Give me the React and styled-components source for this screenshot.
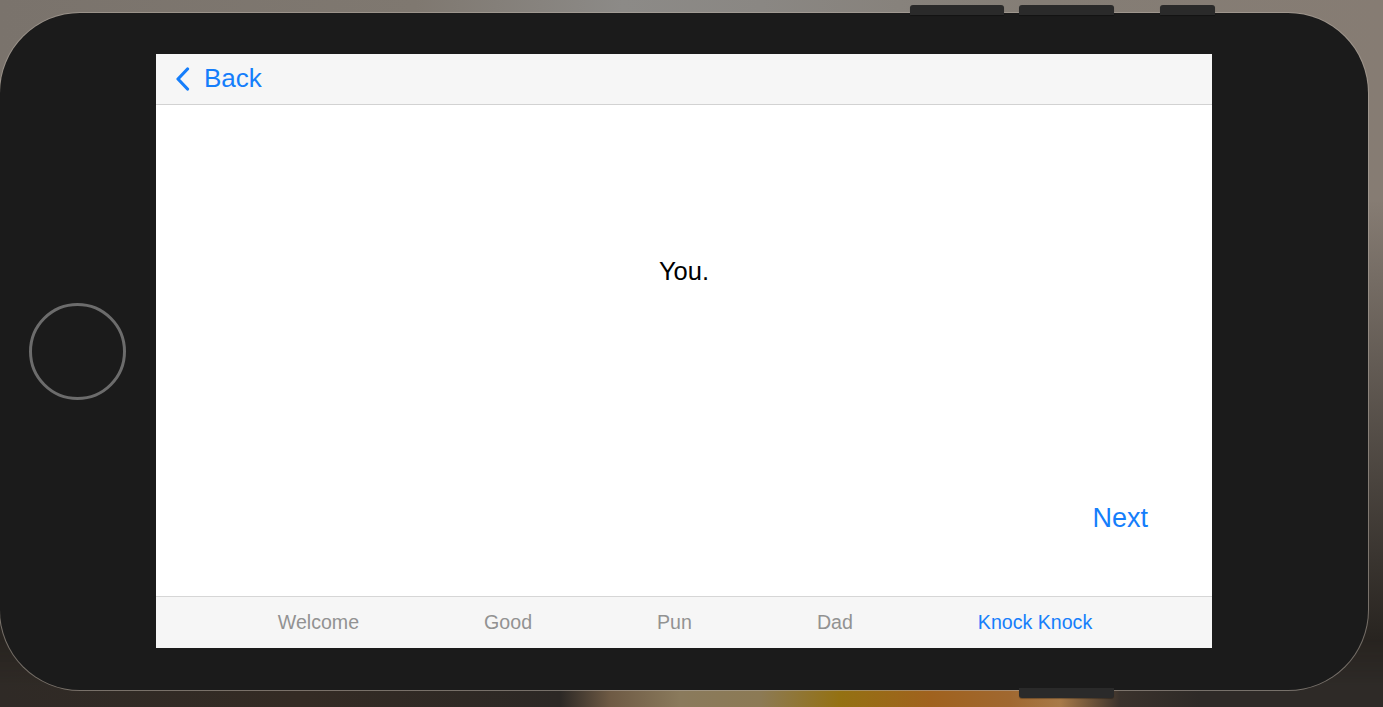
import React from "react";
import styled, { createGlobalStyle } from "styled-components";

const GlobalStyle = createGlobalStyle`
  html, body { margin: 0; padding: 0; overflow: hidden; }
  body { font-family: "Liberation Sans", Arial, sans-serif; }
`;

const Page = styled.div`
  width: 1383px;
  height: 707px;
  box-sizing: border-box;
  padding-top: 13px;
  overflow: hidden;
  position: relative;
  background:
    linear-gradient(180deg, rgba(0,0,0,0) 0px, rgba(0,0,0,0) 200px, rgba(40,36,32,1) 640px),
    linear-gradient(90deg, #7a736c 0%, #7f7870 30%, #8c8a87 45%, #8a8783 55%, #847d75 75%, #867c73 100%);
`;

const BottomGlow = styled.div`
  position: absolute;
  left: 0;
  right: 0;
  top: 640px;
  bottom: 0;
  -webkit-mask-image: linear-gradient(180deg, transparent 0px, #000 45px);
  mask-image: linear-gradient(180deg, transparent 0px, #000 45px);
  background: linear-gradient(90deg,
    #2f2a26 0px, #342b24 300px, #2c2825 560px,
    #6e5a44 610px, #8a7a5c 680px, #8c7a55 760px,
    #947112 840px, #a0621e 930px, #a06830 1010px, #a87a48 1060px,
    #3a322c 1120px, #2e2a27 1200px, #2e2a27 1383px);
`;

const Device = styled.div`
  position: relative;
  z-index: 1;
  width: 1368px;
  height: 677px;
  border-radius: 80px;
  background: #1b1b1b;
  box-shadow: 0 0 0 1px rgba(180, 172, 162, 0.55);
  display: flex;
  align-items: flex-start;
`;

const Bezel = styled.div`
  width: 156px;
  height: 100%;
  display: flex;
  align-items: center;
  justify-content: center;
  flex-shrink: 0;
`;

const HomeButton = styled.div`
  width: 91px;
  height: 91px;
  border-radius: 50%;
  border: 3px solid #6c6c6c;
  margin-left: -2px;
`;

const SideButton = styled.div`
  position: absolute;
  left: ${(p) => p.$x}px;
  width: ${(p) => p.$w}px;
  height: 10px;
  background: #2a2a2a;
  border-radius: ${(p) => (p.$bottom ? "0 0 3px 3px" : "3px 3px 0 0")};
  ${(p) => (p.$bottom ? "bottom: -8px;" : "top: -8px;")}
  box-shadow: 0 1px 1px rgba(0,0,0,0.3);
`;

const Screen = styled.div`
  margin-top: 41px;
  width: 1056px;
  height: 594px;
  background: #ffffff;
  display: flex;
  flex-direction: column;
  font-family: "Liberation Sans", Arial, sans-serif;
`;

const NavBar = styled.div`
  height: 50px;
  flex-shrink: 0;
  background: #f6f6f6;
  border-bottom: 1px solid #d2d2d2;
  display: flex;
  align-items: center;
  padding-left: 19px;
`;

const BackButton = styled.div`
  display: flex;
  align-items: center;
  gap: 14px;
  color: #157efb;
  font-size: 26px;
  line-height: 1;
  margin-top: -3px;
`;

const Chevron = styled.svg`
  margin-top: 2px;
`;

const Content = styled.div`
  flex: 1;
  display: flex;
  flex-direction: column;
`;

const Message = styled.div`
  height: 332px;
  display: flex;
  align-items: center;
  justify-content: center;
  font-size: 25.5px;
  color: #000;
`;

const FooterRow = styled.div`
  display: flex;
  justify-content: flex-end;
  padding-right: 64px;
  margin-top: 66px;
`;

const NextButton = styled.div`
  color: #157efb;
  font-size: 27px;
  line-height: 30px;
`;

const TabBar = styled.div`
  height: 51px;
  flex-shrink: 0;
  background: #f6f6f6;
  border-top: 1px solid #d6d6d6;
  display: flex;
  align-items: center;
  justify-content: center;
  gap: 125px;
  padding-left: 2px;
`;

const Tab = styled.div`
  font-size: 19.6px;
  color: ${(p) => (p.$active ? "#157efb" : "#929292")};
`;

const tabs = ["Welcome", "Good", "Pun", "Dad", "Knock Knock"];

export default function App() {
  return (
    <>
      <GlobalStyle />
      <Page>
        <BottomGlow />
        <Device>
          <SideButton $x={910} $w={94} />
          <SideButton $x={1019} $w={95} />
          <SideButton $x={1160} $w={55} />
          <SideButton $x={1019} $w={95} $bottom />
          <Bezel>
            <HomeButton />
          </Bezel>
          <Screen>
            <NavBar>
              <BackButton>
                <Chevron width="15" height="24" viewBox="0 0 15 24" fill="none">
                  <path d="M12.5 2 L3 12 L12.5 22" stroke="#157efb" strokeWidth="3.2" strokeLinecap="round" strokeLinejoin="round" />
                </Chevron>
                <span>Back</span>
              </BackButton>
            </NavBar>
            <Content>
              <Message>You.</Message>
              <FooterRow>
                <NextButton>Next</NextButton>
              </FooterRow>
            </Content>
            <TabBar>
              {tabs.map((t) => (
                <Tab key={t} $active={t === "Knock Knock"}>{t}</Tab>
              ))}
            </TabBar>
          </Screen>
        </Device>
      </Page>
    </>
  );
}
